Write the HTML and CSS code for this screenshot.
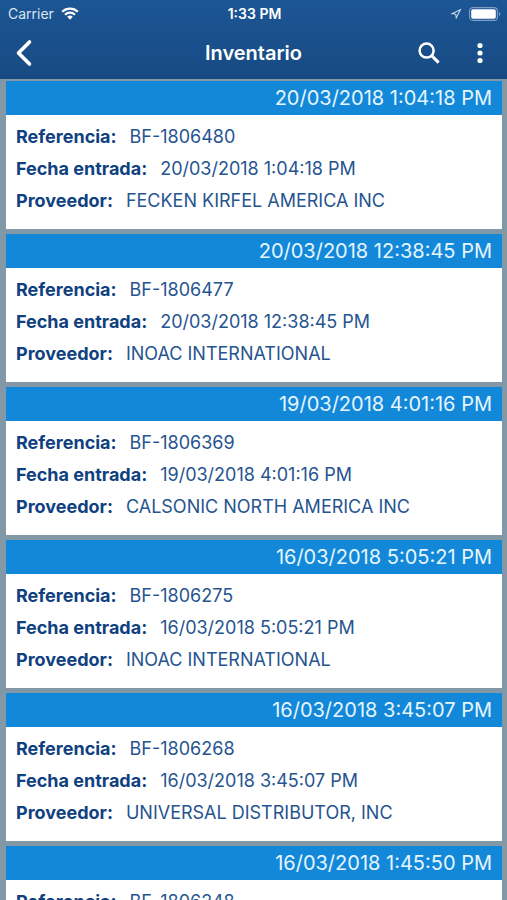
FILE: index.html
```html
<!DOCTYPE html>
<html lang="es">
<head>
<meta charset="utf-8">
<meta name="viewport" content="width=device-width, initial-scale=1">
<title>Inventario</title>
<link rel="stylesheet" href="styles.css">
</head>
<body>
<header class="top">
  <div class="status">
    <div class="status-left">
      <span>Carrier</span>
      <svg class="wifi" width="18" height="13" viewBox="0 0 18 13" aria-hidden="true">
        <path d="M1.2 4.8a11.2 11.2 0 0 1 15.6 0M4 7.7a7.2 7.2 0 0 1 10 0" fill="none" stroke="#fff" stroke-width="2.2"/>
        <path d="M6.2 9.8a4 4 0 0 1 5.6 0L9 12.7z" fill="#fff"/>
      </svg>
    </div>
    <span class="clock">1:33 PM</span>
    <div class="status-right">
      <svg width="12" height="12" viewBox="0 0 12 12" aria-hidden="true">
        <path d="M11.6.4.2 5.9l5 .7.8 4.9zM9.2 2.8 6.5 8.2 6.2 5.7l-2.5-.3z" fill="#cfe0f2" fill-rule="evenodd"/>
      </svg>
      <svg width="32" height="14" viewBox="0 0 32 14" aria-hidden="true">
        <rect x=".6" y=".6" width="27.8" height="12.8" rx="3.4" fill="none" stroke="#7f9fc5" stroke-width="1.1"/>
        <rect x="2.2" y="2.2" width="24.6" height="9.6" rx="1.8" fill="#fff"/>
        <path d="M30 4.8c1.7.8 1.7 3.6 0 4.4z" fill="#7f9fc5"/>
      </svg>
    </div>
  </div>
  <nav class="bar">
    <div class="side">
      <button class="icon" aria-label="Atrás">
        <svg width="18" height="28" viewBox="0 0 18 28" aria-hidden="true"><path d="M14.5 3 3.5 14l11 11" fill="none" stroke="#fff" stroke-width="3.6" stroke-linecap="round" stroke-linejoin="round"/></svg>
      </button>
    </div>
    <h1>Inventario</h1>
    <div class="side end">
      <button class="icon" aria-label="Buscar">
        <svg width="24" height="24" viewBox="0 0 24 24" aria-hidden="true"><circle cx="9.6" cy="9.6" r="7" fill="none" stroke="#fff" stroke-width="2.5"/><path d="m14.6 14.6 7 7" stroke="#fff" stroke-width="3"/></svg>
      </button>
      <button class="icon" aria-label="Más opciones">
        <svg width="6" height="22" viewBox="0 0 6 22" aria-hidden="true" fill="#fff"><circle cx="3" cy="3.5" r="2.6"/><circle cx="3" cy="11" r="2.6"/><circle cx="3" cy="18.5" r="2.6"/></svg>
      </button>
    </div>
  </nav>
</header>
<main class="list">
  <article class="card">
    <h2>20/03/2018 1:04:18 PM</h2>
    <dl>
      <div><dt>Referencia:</dt><dd>BF-1806480</dd></div>
      <div><dt>Fecha entrada:</dt><dd>20/03/2018 1:04:18 PM</dd></div>
      <div><dt>Proveedor:</dt><dd>FECKEN KIRFEL AMERICA INC</dd></div>
    </dl>
  </article>
  <article class="card">
    <h2>20/03/2018 12:38:45 PM</h2>
    <dl>
      <div><dt>Referencia:</dt><dd>BF-1806477</dd></div>
      <div><dt>Fecha entrada:</dt><dd>20/03/2018 12:38:45 PM</dd></div>
      <div><dt>Proveedor:</dt><dd>INOAC INTERNATIONAL</dd></div>
    </dl>
  </article>
  <article class="card">
    <h2>19/03/2018 4:01:16 PM</h2>
    <dl>
      <div><dt>Referencia:</dt><dd>BF-1806369</dd></div>
      <div><dt>Fecha entrada:</dt><dd>19/03/2018 4:01:16 PM</dd></div>
      <div><dt>Proveedor:</dt><dd>CALSONIC NORTH AMERICA INC</dd></div>
    </dl>
  </article>
  <article class="card">
    <h2>16/03/2018 5:05:21 PM</h2>
    <dl>
      <div><dt>Referencia:</dt><dd>BF-1806275</dd></div>
      <div><dt>Fecha entrada:</dt><dd>16/03/2018 5:05:21 PM</dd></div>
      <div><dt>Proveedor:</dt><dd>INOAC INTERNATIONAL</dd></div>
    </dl>
  </article>
  <article class="card">
    <h2>16/03/2018 3:45:07 PM</h2>
    <dl>
      <div><dt>Referencia:</dt><dd>BF-1806268</dd></div>
      <div><dt>Fecha entrada:</dt><dd>16/03/2018 3:45:07 PM</dd></div>
      <div><dt>Proveedor:</dt><dd>UNIVERSAL DISTRIBUTOR, INC</dd></div>
    </dl>
  </article>
  <article class="card">
    <h2>16/03/2018 1:45:50 PM</h2>
    <dl>
      <div><dt>Referencia:</dt><dd>BF-1806248</dd></div>
    </dl>
  </article>
</main>
</body>
</html>
```
FILE: styles.css
```css
* { box-sizing: border-box; }
body {
  margin: 0;
  height: 100vh;
  display: flex;
  flex-direction: column;
  overflow: hidden;
  font-family: Inter, "Liberation Sans", sans-serif;
  background: #8398a7;
}
h1, h2, dl, dd { margin: 0; }
.top {
  flex: none;
  color: #fff;
  background: linear-gradient(#1c5694, #174a83);
}
.status {
  display: grid;
  grid-template-columns: 1fr auto 1fr;
  align-items: center;
  height: 27px;
  padding: 0 6px 0 8px;
  font-size: 14px;
}
.status-left, .status-right { display: flex; align-items: center; gap: 7px; }
.status-left { color: #d9e5f2; }
.status-right { justify-content: flex-end; }
.clock { font-weight: 600; }
.bar {
  display: grid;
  grid-template-columns: 1fr auto 1fr;
  align-items: center;
  height: 52px;
}
.bar h1 { font-size: 20px; font-weight: 600; }
.side { display: flex; align-items: center; padding-left: 15px; }
.end { justify-content: flex-end; gap: 36px; padding: 0 24px 0 0; }
.icon {
  display: flex;
  padding: 0;
  border: 0;
  background: none;
}
.list {
  flex: 1;
  min-height: 0;
  overflow: hidden;
  display: flex;
  flex-direction: column;
  gap: 5px;
  padding: 2px 5px 0 6px;
}
.card { flex: none; background: #fff; }
.card h2 {
  padding: 0 10px;
  background: #1488d8;
  color: #e4f6ff;
  font-size: 20px;
  font-weight: 400;
  line-height: 34px;
  text-align: right;
}
.card dl {
  padding: 6px 10px 12px;
  font-size: 18px;
  line-height: 32px;
}
.card dl div { display: flex; gap: 13px; }
.card dt { color: #0f4180; font-weight: 700; }
.card dd { color: #26548f; }
```
